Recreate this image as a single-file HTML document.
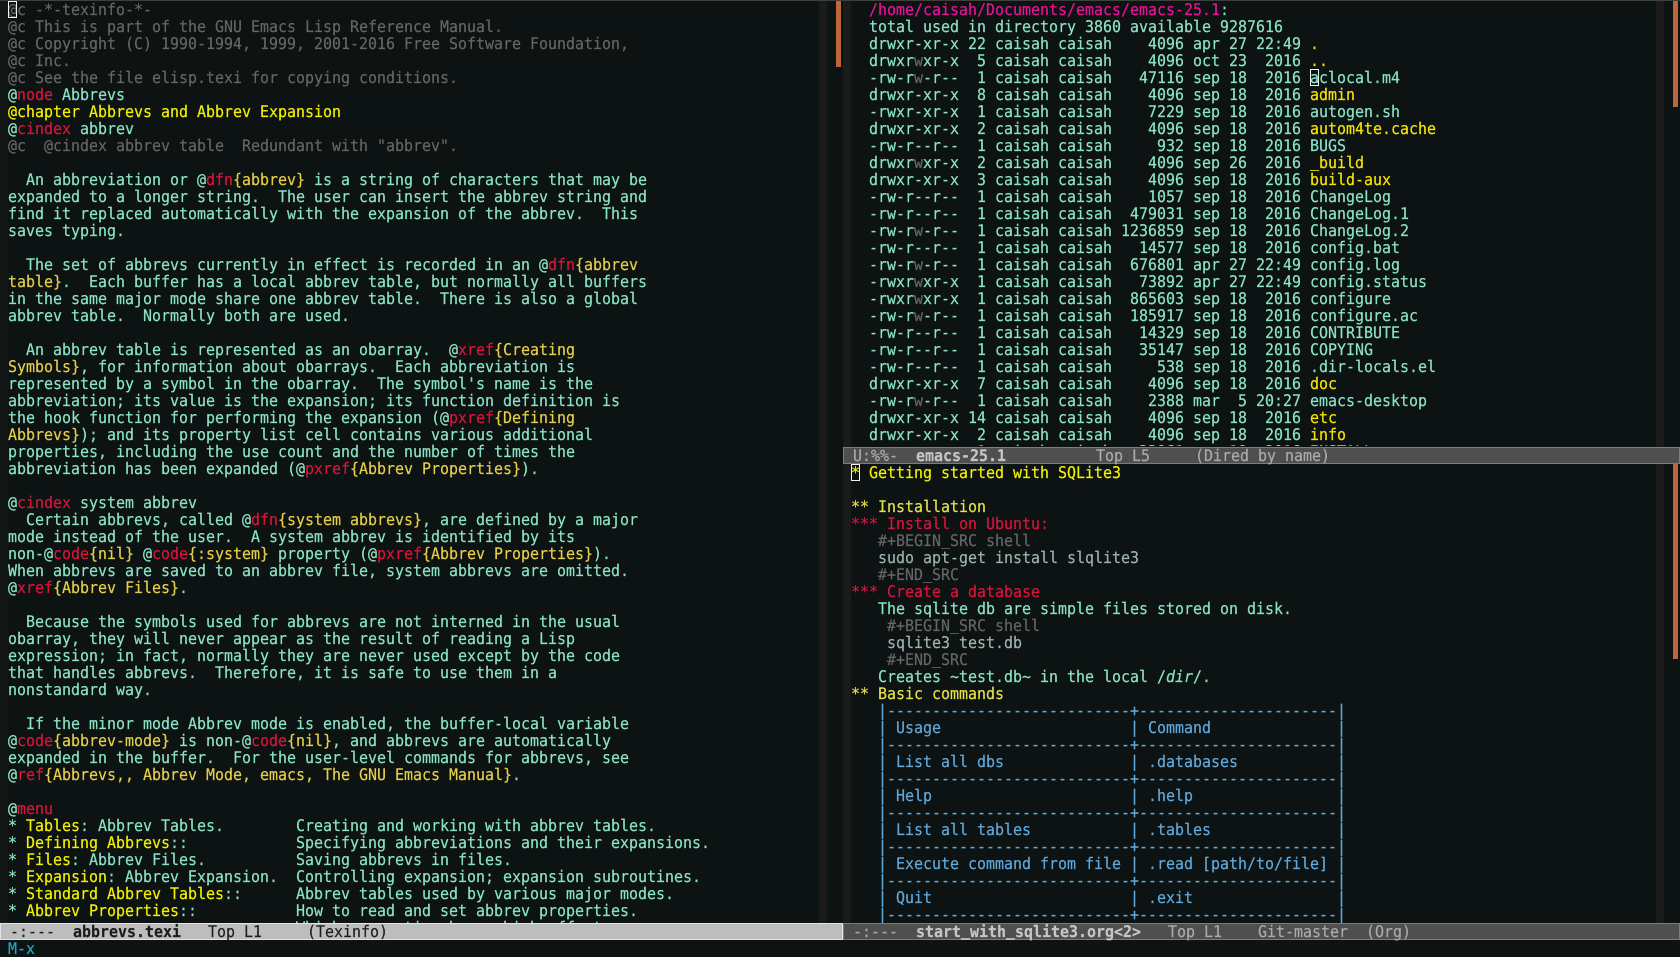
<!DOCTYPE html>
<html>
<head>
<meta charset="utf-8">
<title>Emacs</title>
<style>
html,body{margin:0;padding:0;width:1680px;height:957px;overflow:hidden;background:#0d1312}
body{position:relative;font-family:"DejaVu Sans Mono","Liberation Mono",monospace;font-size:16px;line-height:17px;color:#8be3c6;text-rendering:geometricPrecision;-webkit-text-stroke:.2px currentColor}
.box{position:absolute;overflow:hidden}
pre{position:absolute;margin:0;font:inherit;line-height:17px;white-space:pre;transform:scaleX(.9343);transform-origin:0 0}
.bar{position:absolute;background:#bf653c}
.st{position:absolute;background:#1a1b1a}
.ml{position:absolute;box-sizing:border-box;height:17px}
.ml pre{top:-1px}
.on{background:#bdbdbd;border:1px solid #e4e4e4;color:#1c1c1c}
.off{background:#4f4f4f;border:1px solid #7d7d7d;color:#ababab}
.off b{color:#c6c6c6}
.cur{position:absolute;box-sizing:border-box;width:9px;height:17px;border:1px solid #f2f2f2}
.c{color:#666}
.r{color:#dc143c}
.g{color:#e6cf4a}
.y{color:#f2f200}
.d{color:#f6e400}
.p{color:#e8149a}
.k{color:#e4e24a}
.s{color:#9fb4b0}
.t{color:#62a9dc}
.u{position:relative;top:-1px}
</style>
</head>
<body>
<div style="position:absolute;left:0;top:0;width:1680px;height:1px;background:#3f403c"></div>
<div class="st" style="left:0;top:1px;width:8px;height:922px;background:#131716"></div>
<div class="st" style="left:819px;top:1px;width:8px;height:922px"></div>
<div class="bar" style="left:836px;top:1px;width:5px;height:66px"></div>
<div class="st" style="left:843px;top:1px;width:8px;height:922px"></div>
<div class="st" style="left:1656px;top:1px;width:8px;height:922px"></div>
<div class="bar" style="left:1673px;top:1px;width:5px;height:106px"></div>
<div class="bar" style="left:1673px;top:464px;width:5px;height:195px"></div>

<div class="box" style="left:8px;top:1px;width:810px;height:922px">
<pre style="left:0;top:0"><span class="c">@c -*-texinfo-*-
@c This is part of the GNU Emacs Lisp Reference Manual.
@c Copyright (C) 1990-1994, 1999, 2001-2016 Free Software Foundation,
@c Inc.
@c See the file elisp.texi for copying conditions.</span>
@<span class="r">node</span> Abbrevs
<span class="y">@chapter Abbrevs and Abbrev Expansion</span>
@<span class="r">cindex</span> abbrev
<span class="c">@c  @cindex abbrev table  Redundant with "abbrev".</span>

  An abbreviation or @<span class="r">dfn</span><span class="g">{abbrev}</span> is a string of characters that may be
expanded to a longer string.  The user can insert the abbrev string and
find it replaced automatically with the expansion of the abbrev.  This
saves typing.

  The set of abbrevs currently in effect is recorded in an @<span class="r">dfn</span><span class="g">{abbrev
table}</span>.  Each buffer has a local abbrev table, but normally all buffers
in the same major mode share one abbrev table.  There is also a global
abbrev table.  Normally both are used.

  An abbrev table is represented as an obarray.  @<span class="r">xref</span><span class="g">{Creating
Symbols}</span>, for information about obarrays.  Each abbreviation is
represented by a symbol in the obarray.  The symbol's name is the
abbreviation; its value is the expansion; its function definition is
the hook function for performing the expansion (@<span class="r">pxref</span><span class="g">{Defining
Abbrevs}</span>); and its property list cell contains various additional
properties, including the use count and the number of times the
abbreviation has been expanded (@<span class="r">pxref</span><span class="g">{Abbrev Properties}</span>).

@<span class="r">cindex</span> system abbrev
  Certain abbrevs, called @<span class="r">dfn</span><span class="g">{system abbrevs}</span>, are defined by a major
mode instead of the user.  A system abbrev is identified by its
non-@<span class="r">code</span><span class="g">{nil}</span> @<span class="r">code</span><span class="g">{:system}</span> property (@<span class="r">pxref</span><span class="g">{Abbrev Properties}</span>).
When abbrevs are saved to an abbrev file, system abbrevs are omitted.
@<span class="r">xref</span><span class="g">{Abbrev Files}</span>.

  Because the symbols used for abbrevs are not interned in the usual
obarray, they will never appear as the result of reading a Lisp
expression; in fact, normally they are never used except by the code
that handles abbrevs.  Therefore, it is safe to use them in a
nonstandard way.

  If the minor mode Abbrev mode is enabled, the buffer-local variable
@<span class="r">code</span><span class="g">{abbrev-mode}</span> is non-@<span class="r">code</span><span class="g">{nil}</span>, and abbrevs are automatically
expanded in the buffer.  For the user-level commands for abbrevs, see
@<span class="r">ref</span><span class="g">{Abbrevs,, Abbrev Mode, emacs, The GNU Emacs Manual}</span>.

@<span class="r">menu</span>
* <span class="y">Tables</span>: Abbrev Tables.        Creating and working with abbrev tables.
* <span class="y">Defining Abbrevs</span>::            Specifying abbreviations and their expansions.
* <span class="y">Files</span>: Abbrev Files.          Saving abbrevs in files.
* <span class="y">Expansion</span>: Abbrev Expansion.  Controlling expansion; expansion subroutines.
* <span class="y">Standard Abbrev Tables</span>::      Abbrev tables used by various major modes.
* <span class="y">Abbrev Properties</span>::           How to read and set abbrev properties.
                                Which properties have which effects.</pre>
</div>
<div class="cur" style="left:8px;top:1px"></div>

<div class="box" style="left:851px;top:1px;width:800px;height:445px">
<pre style="left:0;top:0">  <span class="p">/home/caisah/Documents/emacs/emacs-25.1</span>:
  total used in directory 3860 available 9287616
  drwxr-xr-x 22 caisah caisah    4096 apr 27 22:49 <span class="d">.</span>
  drwxr<span class="c">w</span>xr-x  5 caisah caisah    4096 oct 23  2016 <span class="d">..</span>
  -rw-r<span class="c">w</span>-r--  1 caisah caisah   47116 sep 18  2016 aclocal.m4
  drwxr-xr-x  8 caisah caisah    4096 sep 18  2016 <span class="d">admin</span>
  -rwxr-xr-x  1 caisah caisah    7229 sep 18  2016 autogen.sh
  drwxr-xr-x  2 caisah caisah    4096 sep 18  2016 <span class="d">autom4te.cache</span>
  -rw-r--r--  1 caisah caisah     932 sep 18  2016 BUGS
  drwxr<span class="c">w</span>xr-x  2 caisah caisah    4096 sep 26  2016 <span class="d"><span class="u">_</span>build</span>
  drwxr-xr-x  3 caisah caisah    4096 sep 18  2016 <span class="d">build-aux</span>
  -rw-r--r--  1 caisah caisah    1057 sep 18  2016 ChangeLog
  -rw-r--r--  1 caisah caisah  479031 sep 18  2016 ChangeLog.1
  -rw-r<span class="c">w</span>-r--  1 caisah caisah 1236859 sep 18  2016 ChangeLog.2
  -rw-r--r--  1 caisah caisah   14577 sep 18  2016 config.bat
  -rw-r<span class="c">w</span>-r--  1 caisah caisah  676801 apr 27 22:49 config.log
  -rwxr<span class="c">w</span>xr-x  1 caisah caisah   73892 apr 27 22:49 config.status
  -rwxr<span class="c">w</span>xr-x  1 caisah caisah  865603 sep 18  2016 configure
  -rw-r<span class="c">w</span>-r--  1 caisah caisah  185917 sep 18  2016 configure.ac
  -rw-r--r--  1 caisah caisah   14329 sep 18  2016 CONTRIBUTE
  -rw-r--r--  1 caisah caisah   35147 sep 18  2016 COPYING
  -rw-r--r--  1 caisah caisah     538 sep 18  2016 .dir-locals.el
  drwxr-xr-x  7 caisah caisah    4096 sep 18  2016 <span class="d">doc</span>
  -rw-r<span class="c">w</span>-r--  1 caisah caisah    2388 mar  5 20:27 emacs-desktop
  drwxr-xr-x 14 caisah caisah    4096 sep 18  2016 <span class="d">etc</span>
  drwxr-xr-x  2 caisah caisah    4096 sep 18  2016 <span class="d">info</span>
  -rw-r--r--  1 caisah caisah   33961 sep 18  2016 INSTALL</pre>
</div>
<div class="cur" style="left:1310px;top:69px"></div>

<div class="ml off" style="left:843px;top:447px;width:837px"><pre style="left:9px">U:%%-  <b>emacs-25.1</b>          Top L5     (Dired by name)</pre></div>

<div class="box" style="left:851px;top:464px;width:800px;height:459px">
<pre style="left:0;top:0"><span class="y">* Getting started with SQLite3</span>

<span class="k">** Installation</span>
<span class="r">*** Install on Ubuntu:</span>
   <span class="c">#+BEGIN<span class="u">_</span>SRC shell</span>
   <span class="s">sudo apt-get install slqlite3</span>
   <span class="c">#+END<span class="u">_</span>SRC</span>
<span class="r">*** Create a database</span>
   The sqlite db are simple files stored on disk.
    <span class="c">#+BEGIN<span class="u">_</span>SRC shell</span>
    <span class="s">sqlite3 test.db</span>
    <span class="c">#+END<span class="u">_</span>SRC</span>
   Creates ~test.db~ in the local /<i>dir</i>/.
<span class="k">** Basic commands</span>
<span class="t">   |---------------------------+----------------------|
   | Usage                     | Command              |
   |---------------------------+----------------------|
   | List all dbs              | .databases           |
   |---------------------------+----------------------|
   | Help                      | .help                |
   |---------------------------+----------------------|
   | List all tables           | .tables              |
   |---------------------------+----------------------|
   | Execute command from file | .read [path/to/file] |
   |---------------------------+----------------------|
   | Quit                      | .exit                |
   |---------------------------+----------------------|</span></pre>
</div>
<div class="cur" style="left:851px;top:464px"></div>

<div class="ml on" style="left:0;top:923px;width:843px"><pre style="left:9px">-:---  <b>abbrevs.texi</b>   Top L1     (Texinfo)</pre></div>
<div class="ml off" style="left:843px;top:923px;width:837px"><pre style="left:9px">-:---  <b>start<span class="u">_</span>with<span class="u">_</span>sqlite3.org&lt;2&gt;</b>   Top L1    Git-master  (Org)</pre></div>

<pre style="left:8px;top:940px;color:#22a6c4">M-x</pre>
</body>
</html>
